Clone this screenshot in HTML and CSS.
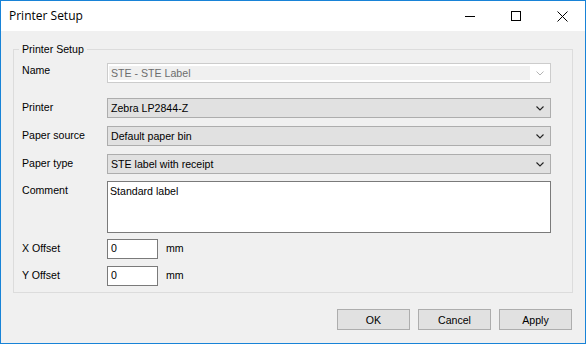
FILE: index.html
```html
<!DOCTYPE html>
<html>
<head>
<meta name="viewport" content="width=device-width, initial-scale=1">
<link rel="stylesheet" href="styles.css">
</head>
<body>

<div class="window">
  <div class="titlebar">
    <div class="title">Printer Setup</div>
    <div class="caption-btn">
      <svg width="10" height="10" viewBox="0 0 10 10"><path d="M0 5.5H10" stroke="#000" stroke-width="1"/></svg>
    </div>
    <div class="caption-btn">
      <svg width="10" height="10" viewBox="0 0 10 10"><rect x="0.5" y="0.5" width="9" height="9" fill="none" stroke="#000" stroke-width="1"/></svg>
    </div>
    <div class="caption-btn">
      <svg width="11" height="11" viewBox="0 0 11 11"><path d="M0.5 0.5L10.5 10.5M10.5 0.5L0.5 10.5" stroke="#000" stroke-width="1"/></svg>
    </div>
  </div>

  <div class="content">
    <fieldset class="group">
      <legend>Printer Setup</legend>

      <div class="row row-name">
        <label class="lbl lbl-name">Name</label>
        <div class="combo disabled">
          <span class="combo-text">STE - STE Label</span>
          <span class="combo-arrow">
            <svg width="8" height="5" viewBox="0 0 8 5"><path d="M0.5 0.5L4 4L7.5 0.5" fill="none" stroke="#b4b4b4" stroke-width="1"/></svg>
          </span>
        </div>
      </div>

      <div class="row row-printer">
        <label class="lbl">Printer</label>
        <div class="combo">
          <span class="combo-text">Zebra LP2844-Z</span>
          <span class="combo-arrow">
            <svg width="8" height="5" viewBox="0 0 8 5"><path d="M0.5 0.5L4 4L7.5 0.5" fill="none" stroke="#222" stroke-width="1.1"/></svg>
          </span>
        </div>
      </div>

      <div class="row row-tight">
        <label class="lbl">Paper source</label>
        <div class="combo">
          <span class="combo-text">Default paper bin</span>
          <span class="combo-arrow">
            <svg width="8" height="5" viewBox="0 0 8 5"><path d="M0.5 0.5L4 4L7.5 0.5" fill="none" stroke="#222" stroke-width="1.1"/></svg>
          </span>
        </div>
      </div>

      <div class="row row-tight">
        <label class="lbl">Paper type</label>
        <div class="combo">
          <span class="combo-text">STE label with receipt</span>
          <span class="combo-arrow">
            <svg width="8" height="5" viewBox="0 0 8 5"><path d="M0.5 0.5L4 4L7.5 0.5" fill="none" stroke="#222" stroke-width="1.1"/></svg>
          </span>
        </div>
      </div>

      <div class="row row-comment">
        <label class="lbl">Comment</label>
        <div class="memo">Standard label</div>
      </div>

      <div class="row row-offset-x">
        <label class="lbl">X Offset</label>
        <div class="textbox">0</div>
        <span class="unit">mm</span>
      </div>

      <div class="row row-offset-y">
        <label class="lbl">Y Offset</label>
        <div class="textbox">0</div>
        <span class="unit">mm</span>
      </div>
    </fieldset>

    <div class="actions">
      <button class="btn">OK</button>
      <button class="btn">Cancel</button>
      <button class="btn">Apply</button>
    </div>
  </div>
</div>

</body>
</html>
```

FILE: styles.css
```css
body {
  margin: 0;
  font-family: "Liberation Sans", Arial, sans-serif;
  font-size: 10.6px;
  line-height: 13px;
  color: #000;
  background-color: #f0f0f0;
}

.window {
  width: 586px;
  height: 344px;
  box-sizing: border-box;
  border: 1px solid #1883d7;
  background-color: #f0f0f0;
  display: flex;
  flex-direction: column;
}

.titlebar {
  height: 30px;
  background-color: white;
  display: flex;
  align-items: stretch;
}

.title {
  flex: 1;
  padding-left: 8px;
  font-family: "Segoe UI", "Open Sans", sans-serif;
  font-size: 12px;
  line-height: 30px;
}

.caption-btn {
  width: 46px;
  display: flex;
  align-items: center;
  justify-content: center;
}

.content {
  padding: 0 12px;
}

.group {
  margin: 12px 0 0 0;
  padding: 7px 21px 6px 5px;
  border: 1px solid #dcdcdc;
  min-width: 0;
}

.group legend {
  padding: 0 3px;
  margin: 0;
}

.row {
  display: flex;
  align-items: flex-start;
}

.row-printer { margin-top: 15px; }
.row-tight { margin-top: 8px; }
.row-comment { margin-top: 7px; }
.row-offset-x { margin-top: 6px; }
.row-offset-y { margin-top: 7px; }

.lbl {
  width: 85px;
  padding: 3px 0 0 3px;
}

.lbl-name {
  padding-top: 1px;
}

.combo {
  width: 444px;
  height: 20px;
  box-sizing: border-box;
  border: 1px solid #adadad;
  background-color: #e1e1e1;
  display: flex;
}

.combo-text {
  flex: 1;
  padding: 1px 0 0 3px;
  line-height: 17px;
}

.combo-arrow {
  width: 19px;
  display: flex;
  align-items: center;
  justify-content: center;
  padding-right: 1px;
}

.combo.disabled {
  border-color: #cccccc;
  background-color: white;
  padding: 2px 0 2px 1px;
  color: #6d6d6d;
}

.combo.disabled .combo-text {
  background-color: #f0f0f0;
  padding: 0 0 0 2px;
  line-height: 14px;
}

.memo {
  width: 444px;
  height: 52px;
  box-sizing: border-box;
  border: 1px solid #7a7a7a;
  background-color: white;
  padding: 3px 2px;
}

.textbox {
  width: 51px;
  height: 20px;
  box-sizing: border-box;
  border: 1px solid #7a7a7a;
  background-color: white;
  padding: 2px 3px;
}

.unit {
  margin-left: 8px;
  padding-top: 3px;
}

.actions {
  display: flex;
  justify-content: flex-end;
  gap: 8px;
  margin-top: 16px;
  padding-right: 1px;
}

.btn {
  width: 73px;
  height: 21px;
  border: 1px solid #adadad;
  background-color: #e1e1e1;
  font-family: "Liberation Sans", Arial, sans-serif;
  font-size: 10.6px;
  color: #000;
  padding: 0;
}
```
